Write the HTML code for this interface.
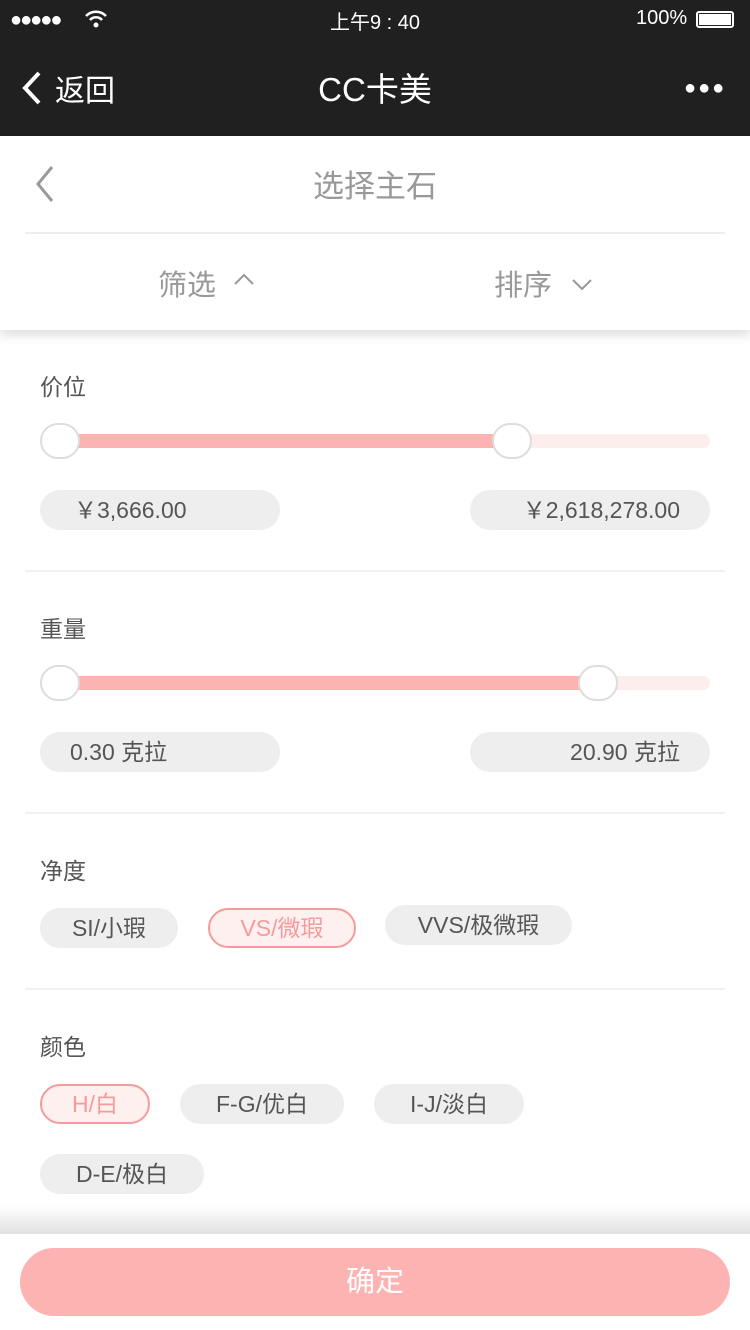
<!DOCTYPE html><html><head><meta charset="utf-8"><style>
*{margin:0;padding:0;box-sizing:border-box}
body{width:750px;height:1330px;background:#fff;font-family:"Liberation Sans","Noto Sans CJK SC",sans-serif;position:relative;overflow:hidden;color:#555}
.a{position:absolute}
.top{left:0;top:0;width:750px;height:136px;background:#202020;color:#fff}
.hdr{left:0;top:136px;width:750px;height:194px;background:#fff;box-shadow:0 6px 10px rgba(0,0,0,.12);z-index:2}
.lbl{font-size:23px;color:#555;left:40px}
.pill{background:#eee;border-radius:20px;height:40px;font-size:23px;color:#555;line-height:40px;text-align:center}
.sel{background:#fff0f0;border:2px solid #f79a9a;color:#f79a9a;line-height:36px}
.hr{left:25px;width:700px;height:2px;background:#f0f0f0}
.trk{height:14px;border-radius:7px;background:#fdeeee;left:40px;width:670px}
.fill{height:14px;background:#fdb3b1}
.knob{width:40px;height:36px;border-radius:18px;background:#fff;border:2px solid #ddd}
</style></head><body>
<div class="a top">
<div class="a" style="left:10px;top:9px;font-size:20px;letter-spacing:-2px">●●●●●</div>
<svg class="a" style="left:84px;top:10px" width="24" height="18"><path d="M2 6a14 14 0 0 1 20 0M6 10a8 8 0 0 1 12 0" stroke="#fff" stroke-width="2.5" fill="none"/><circle cx="12" cy="15" r="2.5" fill="#fff"/></svg>
<div class="a" style="left:330px;top:6px;font-size:20px">上午9 : 40</div>
<div class="a" style="left:636px;top:7px;font-size:20px">100%</div>
<div class="a" style="left:696px;top:11px;width:38px;height:17px;border:2px solid #fff;border-radius:3px;padding:1px"><div style="background:#fff;width:100%;height:100%"></div></div>
<svg class="a" style="left:20px;top:70px" width="24" height="36"><path d="M19 3L5 18l14 15" stroke="#fff" stroke-width="4" fill="none"/></svg>
<div class="a" style="left:55px;top:66px;font-size:30px">返回</div>
<div class="a" style="left:0;width:750px;text-align:center;top:63px;font-size:33px">CC卡美</div>
<div class="a" style="left:684px;top:77px;font-size:20px;letter-spacing:2px">●●●</div>
</div>
<div class="a hdr">
<svg class="a" style="left:30px;top:28px" width="26" height="40"><path d="M22 3L8 20l14 17" stroke="#999" stroke-width="3" fill="none"/></svg>
<div class="a" style="left:0;width:750px;text-align:center;top:25px;font-size:31px;color:#999">选择主石</div>
<div class="a" style="left:25px;top:96px;width:700px;height:2px;background:#eee"></div>
<div class="a" style="left:158px;top:126px;font-size:29px;color:#999">筛选</div>
<svg class="a" style="left:232px;top:136px" width="24" height="16"><path d="M3 12l9-9 9 9" stroke="#999" stroke-width="2" fill="none"/></svg>
<div class="a" style="left:494px;top:126px;font-size:29px;color:#999">排序</div>
<svg class="a" style="left:570px;top:141px" width="24" height="16"><path d="M3 3l9 9 9-9" stroke="#999" stroke-width="2" fill="none"/></svg>
</div>
<div class="a lbl" style="top:368px">价位</div>
<div class="a trk" style="top:434px"></div><div class="a fill" style="left:60px;top:434px;width:452px"></div>
<div class="a knob" style="left:40px;top:423px"></div><div class="a knob" style="left:492px;top:423px"></div>
<div class="a pill" style="left:40px;top:490px;width:240px;text-align:left;padding-left:34px">￥3,666.00</div>
<div class="a pill" style="left:470px;top:490px;width:240px;text-align:right;padding-right:30px">￥2,618,278.00</div>
<div class="a hr" style="top:570px"></div>
<div class="a lbl" style="top:610px">重量</div>
<div class="a trk" style="top:676px"></div><div class="a fill" style="left:60px;top:676px;width:538px"></div>
<div class="a knob" style="left:40px;top:665px"></div><div class="a knob" style="left:578px;top:665px"></div>
<div class="a pill" style="left:40px;top:732px;width:240px;text-align:left;padding-left:30px">0.30 克拉</div>
<div class="a pill" style="left:470px;top:732px;width:240px;text-align:right;padding-right:30px">20.90 克拉</div>
<div class="a hr" style="top:812px"></div>
<div class="a lbl" style="top:852px">净度</div>
<div class="a pill" style="left:40px;top:908px;width:138px">SI/小瑕</div>
<div class="a pill sel" style="left:208px;top:908px;width:148px">VS/微瑕</div>
<div class="a pill" style="left:385px;top:905px;width:187px">VVS/极微瑕</div>
<div class="a hr" style="top:988px"></div>
<div class="a lbl" style="top:1028px">颜色</div>
<div class="a pill sel" style="left:40px;top:1084px;width:110px">H/白</div>
<div class="a pill" style="left:180px;top:1084px;width:164px">F-G/优白</div>
<div class="a pill" style="left:374px;top:1084px;width:150px">I-J/淡白</div>
<div class="a pill" style="left:40px;top:1154px;width:164px">D-E/极白</div>
<div class="a" style="left:0;top:1205px;width:750px;height:30px;background:linear-gradient(rgba(0,0,0,0),rgba(0,0,0,.12))"></div>
<div class="a" style="left:0;top:1234px;width:750px;height:96px;background:#fff"></div>
<div class="a" style="left:20px;top:1248px;width:710px;height:68px;border-radius:34px;background:#fdb3b1;color:#fff;font-size:29px;text-align:center;line-height:68px">确定</div>
</body></html>
